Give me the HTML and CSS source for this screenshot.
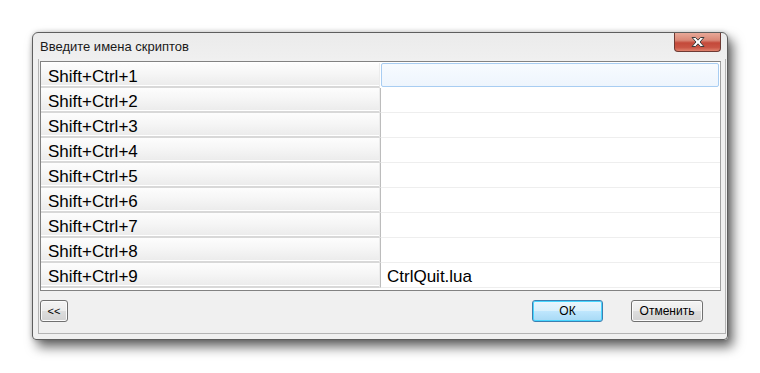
FILE: index.html
```html
<!DOCTYPE html>
<html>
<head>
<meta charset="utf-8">
<link rel="stylesheet" href="styles.css">
</head>
<body>
<div class="window">
  <div class="titlebar">
    <span class="title">Введите имена скриптов</span>
    <div class="close">
      <svg width="20" height="12" viewBox="0 0 20 12">
        <path d="M4 1.5 L7.5 1.5 L10 4.2 L12.5 1.5 L16 1.5 L12 6 L16 10.5 L12.5 10.5 L10 7.8 L7.5 10.5 L4 10.5 L8 6 Z" fill="#ffffff" stroke="#3c3c3c" stroke-width="1" stroke-linejoin="round"/>
      </svg>
    </div>
  </div>
  <div class="client">
    <div class="grid">
      <div class="row"><div class="key">Shift+Ctrl+1</div><div class="val active"></div></div>
      <div class="row"><div class="key">Shift+Ctrl+2</div><div class="val"></div></div>
      <div class="row"><div class="key">Shift+Ctrl+3</div><div class="val"></div></div>
      <div class="row"><div class="key">Shift+Ctrl+4</div><div class="val"></div></div>
      <div class="row"><div class="key">Shift+Ctrl+5</div><div class="val"></div></div>
      <div class="row"><div class="key">Shift+Ctrl+6</div><div class="val"></div></div>
      <div class="row"><div class="key">Shift+Ctrl+7</div><div class="val"></div></div>
      <div class="row"><div class="key">Shift+Ctrl+8</div><div class="val"></div></div>
      <div class="row"><div class="key">Shift+Ctrl+9</div><div class="val">CtrlQuit.lua</div></div>
    </div>
    <div class="buttons">
      <button class="btn back">&lt;&lt;</button>
      <span class="spacer"></span>
      <button class="btn ok">ОК</button>
      <button class="btn cancel">Отменить</button>
    </div>
  </div>
</div>
</body>
</html>
```
FILE: styles.css
```css
html, body {
  margin: 0;
  padding: 0;
  background: #ffffff;
}
body {
  width: 760px;
  height: 373px;
  overflow: hidden;
}
.window {
  margin: 32px 0 0 32px;
  width: 694px;
  height: 306px;
  border: 1px solid #5e5e5e;
  border-radius: 6px 6px 4px 4px;
  background: linear-gradient(#ebebeb, #f0f0f0 30px);
  box-shadow: 5px 7px 12px rgba(0,0,0,0.6), 0 0 5px rgba(0,0,0,0.2);
  display: flex;
  flex-direction: column;
  font-family: "Liberation Sans", Arial, sans-serif;
}
.titlebar {
  height: 26px;
  display: flex;
  align-items: flex-start;
}
.title {
  font-size: 13px;
  color: #1a1a1a;
  padding: 6px 0 0 7px;
}
.close {
  margin-left: auto;
  margin-right: 6px;
  width: 47px;
  height: 19px;
  box-sizing: border-box;
  border: 1px solid #6e3a33;
  border-top: none;
  border-radius: 0 0 4px 4px;
  background: linear-gradient(#e8a898 0%, #d98877 40%, #c4493a 55%, #c95545 80%, #e0826c 100%);
  display: flex;
  align-items: center;
  justify-content: center;
}
.client {
  margin: 0 0 5px 5px;
  width: 688px;
  flex: 1;
  box-sizing: border-box;
  border: 1px solid #b4b4b4;
  border-top: none;
  background: #f0f0f0;
  padding: 2px 0 0 1px;
  display: flex;
  flex-direction: column;
}
.grid {
  width: 681px;
  height: 230px;
  box-sizing: border-box;
  border: 1px solid #828282;
  border-right-color: #a0a0a0;
  background: #ffffff;
  padding-top: 1px;
  display: flex;
  flex-direction: column;
}
.row {
  height: 25px;
  display: flex;
  flex: none;
}
.key {
  width: 339px;
  box-sizing: border-box;
  padding: 1px 0 0 7px;
  font-size: 17px;
  line-height: 26px;
  color: #000000;
  background: linear-gradient(#fdfdfd, #f6f6f6 45%, #ebebeb);
  border-bottom: 2px solid #d8d8d8;
  box-shadow: inset 0 -1px 0 #ffffff;
  border-right: 1px solid #ececec;
}
.val {
  flex: 1;
  box-sizing: border-box;
  border-left: 1px solid #bcbcbc;
  border-bottom: 1px solid #eeeeee;
  padding: 1px 0 0 6px;
  font-size: 17px;
  line-height: 26px;
  color: #000000;
}
.val.active {
  margin: 0 1px 1px 1px;
  border: 1px solid #a8cdf2;
  border-radius: 2px;
  background: linear-gradient(#f7fbff, #eef5fd);
}
.buttons {
  margin-top: 9px;
  display: flex;
  align-items: center;
  height: 22px;
}
.spacer {
  flex: 1;
}
.btn {
  height: 22px;
  box-sizing: border-box;
  border: 1px solid #707070;
  border-radius: 3px;
  background: linear-gradient(#f4f4f4 0%, #ececec 48%, #dddddd 52%, #d2d2d2 100%);
  box-shadow: inset 0 0 0 1px #fbfbfb;
  font-family: "Liberation Sans", sans-serif;
  font-size: 12px;
  color: #000000;
  padding: 0;
}
.back {
  width: 28px;
  font-size: 11px;
}
.ok {
  width: 71px;
  border-color: #3c7fb1;
  background: linear-gradient(#eaf6fd 0%, #d9f0fc 48%, #bee6fd 52%, #a7d9f5 100%);
  box-shadow: inset 0 0 0 1px #48d6ff;
  margin-right: 28px;
}
.cancel {
  width: 72px;
  margin-right: 22px;
}
```
